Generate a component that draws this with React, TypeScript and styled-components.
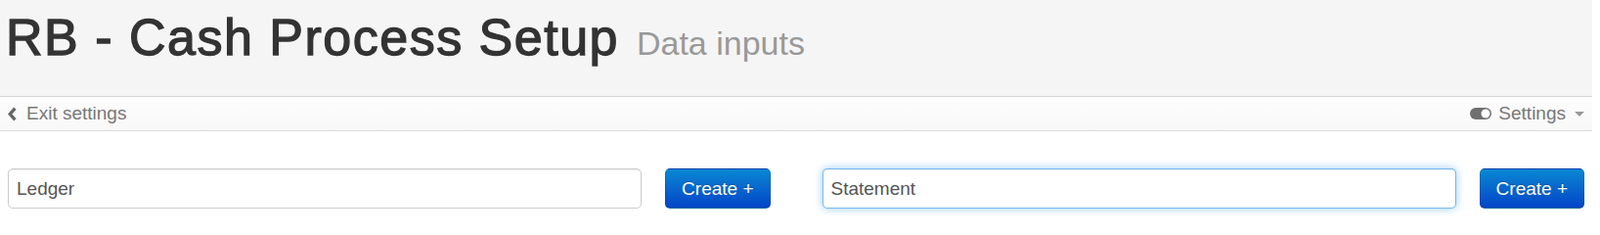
import React from "react";
import styled, { createGlobalStyle } from "styled-components";

const GlobalStyle = createGlobalStyle`
  html, body {
    margin: 0;
    padding: 0;
    background: #fff;
  }
  body {
    font-family: "Liberation Sans", Arial, sans-serif;
    font-size: 19px;
    color: #333;
  }
`;

const Page = styled.div`
  margin-right: 8px;
`;

const Header = styled.header`
  background: #f5f5f5;
  padding: 11px 6px 27px;
`;

const Title = styled.h1`
  margin: 0;
  font-size: 52px;
  line-height: 54px;
  font-weight: 400;
  letter-spacing: 1.5px;
  -webkit-text-stroke: 1.3px #333;
  color: #333;
  white-space: nowrap;

  small {
    font-size: 34px;
    font-weight: 400;
    letter-spacing: 0;
    -webkit-text-stroke: 0;
    color: #999;
    margin-left: 2px;
  }
`;

const NavBar = styled.nav`
  height: 34px;
  display: flex;
  align-items: center;
  justify-content: space-between;
  padding: 0 8px;
  background: linear-gradient(#fdfdfd, #f8f8f8);
  border-top: 1px solid #d6d6d6;
  border-bottom: 1px solid #dcdcdc;
  box-shadow: inset 0 1px 0 #fff;
`;

const NavLink = styled.a<{ $gap?: number }>`
  display: flex;
  align-items: center;
  gap: ${(p) => p.$gap ?? 8}px;
  color: #777;
  font-size: 19px;
  text-decoration: none;
  cursor: pointer;
`;

const Caret = styled.span`
  display: inline-block;
  width: 0;
  height: 0;
  margin-left: 2px;
  border-top: 5px solid #999;
  border-left: 5px solid transparent;
  border-right: 5px solid transparent;
`;

const Forms = styled.div`
  display: grid;
  grid-template-columns: 1fr 1fr;
  column-gap: 53px;
  padding: 38px 8px 9px;
`;

const Field = styled.div`
  display: flex;
  align-items: stretch;
  gap: 24px;
`;

const Input = styled.input<{ $focused?: boolean }>`
  flex: 1;
  min-width: 0;
  height: 41px;
  box-sizing: border-box;
  padding: 5px 8px;
  font-family: "Liberation Sans", Arial, sans-serif;
  font-size: 19px;
  color: #555;
  background: #fff;
  border: 1px solid ${(p) => (p.$focused ? "rgba(82, 168, 236, 0.8)" : "#ccc")};
  border-radius: 5px;
  outline: none;
  box-shadow: ${(p) =>
    p.$focused
      ? "inset 0 1px 1px rgba(0,0,0,.075), 0 0 8px rgba(82,168,236,.6)"
      : "inset 0 1px 1px rgba(0,0,0,.075)"};
`;

const Button = styled.button`
  height: 41px;
  padding: 0 16px;
  font-family: "Liberation Sans", Arial, sans-serif;
  font-size: 19px;
  color: #fff;
  text-shadow: 0 -1px 0 rgba(0, 0, 0, 0.25);
  background-image: linear-gradient(#0a88d2, #0345c8);
  border: 1px solid rgba(0, 0, 0, 0.12);
  border-bottom-color: rgba(0, 0, 0, 0.28);
  border-radius: 5px;
  cursor: pointer;
  white-space: nowrap;
`;

const ChevronLeft = () => (
  <svg width="9" height="15" viewBox="0 0 9 15">
    <polyline
      points="7.4,1.6 2.2,7.5 7.4,13.4"
      fill="none"
      stroke="#666"
      strokeWidth="3.3"
      strokeLinejoin="miter"
    />
  </svg>
);

const ToggleIcon = () => (
  <svg width="22" height="12" viewBox="0 0 22 12">
    <rect x="0" y="0" width="22" height="12" rx="6" fill="#6f6f6f" />
    <circle cx="16" cy="6" r="4.5" fill="#fff" />
  </svg>
);

const inputs = [
  { value: "Ledger", focused: false },
  { value: "Statement", focused: true },
];

export default function App() {
  return (
    <Page>
      <GlobalStyle />
      <Header>
        <Title>
          RB - Cash Process Setup <small>Data inputs</small>
        </Title>
      </Header>
      <NavBar>
        <NavLink $gap={10}>
          <ChevronLeft />
          Exit settings
        </NavLink>
        <NavLink $gap={7}>
          <ToggleIcon />
          Settings
          <Caret />
        </NavLink>
      </NavBar>
      <Forms>
        {inputs.map((f) => (
          <Field key={f.value}>
            <Input defaultValue={f.value} $focused={f.focused} />
            <Button>Create +</Button>
          </Field>
        ))}
      </Forms>
    </Page>
  );
}
